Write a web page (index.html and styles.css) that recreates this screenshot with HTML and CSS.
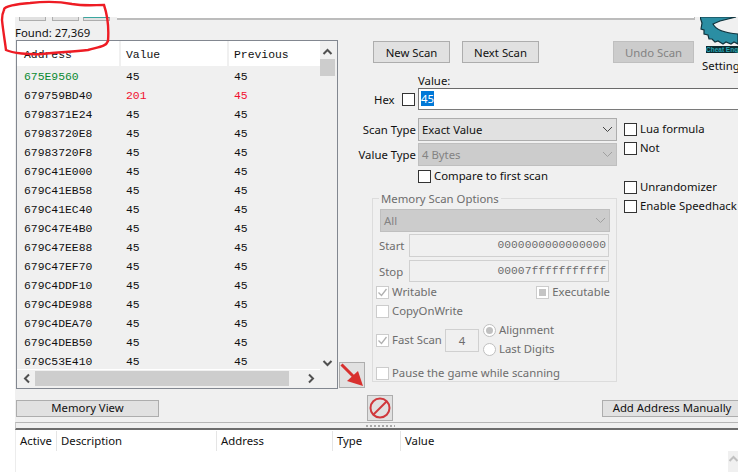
FILE: index.html
```html
<!DOCTYPE html>
<html lang="en">
<head>
<meta charset="utf-8">
<title>Cheat Engine</title>
<link rel="stylesheet" href="styles.css">
</head>
<body>
<div class="window">
  <div class="toolbar">
    <span class="stub stub-a"></span><span class="stub stub-b"></span><span class="stub stub-c"></span><span class="progress"></span>
  </div>
  <div class="found">Found: 27,369</div>
  <div class="middle">
    <div class="results">
      <div class="results-top">
        <div class="table">
          <div class="row head"><span>Address</span><span>Value</span><span>Previous</span></div>
          <div class="row"><span class="green">675E9560</span><span>45</span><span>45</span></div>
          <div class="row"><span>679759BD40</span><span class="red">201</span><span class="red">45</span></div>
          <div class="row"><span>6798371E24</span><span>45</span><span>45</span></div>
          <div class="row"><span>67983720E8</span><span>45</span><span>45</span></div>
          <div class="row"><span>67983720F8</span><span>45</span><span>45</span></div>
          <div class="row"><span>679C41E000</span><span>45</span><span>45</span></div>
          <div class="row"><span>679C41EB58</span><span>45</span><span>45</span></div>
          <div class="row"><span>679C41EC40</span><span>45</span><span>45</span></div>
          <div class="row"><span>679C47E4B0</span><span>45</span><span>45</span></div>
          <div class="row"><span>679C47EE88</span><span>45</span><span>45</span></div>
          <div class="row"><span>679C47EF70</span><span>45</span><span>45</span></div>
          <div class="row"><span>679C4DDF10</span><span>45</span><span>45</span></div>
          <div class="row"><span>679C4DE988</span><span>45</span><span>45</span></div>
          <div class="row"><span>679C4DEA70</span><span>45</span><span>45</span></div>
          <div class="row"><span>679C4DEB50</span><span>45</span><span>45</span></div>
          <div class="row"><span>679C53E410</span><span>45</span><span>45</span></div>
        </div>
        <div class="vscroll">
          <svg class="chev" width="11" height="8" viewBox="0 0 11 8"><path d="M1.5 6 L5.5 2 L9.5 6" /></svg>
          <div class="vthumb"></div>
          <svg class="chev chev-down" width="11" height="8" viewBox="0 0 11 8"><path d="M1.5 2 L5.5 6 L9.5 2" /></svg>
        </div>
      </div>
      <div class="hscroll">
        <svg class="chev" width="8" height="11" viewBox="0 0 8 11"><path d="M6 1.5 L2 5.5 L6 9.5" /></svg>
        <div class="hthumb"></div>
        <svg class="chev" width="8" height="11" viewBox="0 0 8 11"><path d="M2 1.5 L6 5.5 L2 9.5" /></svg>
      </div>
    </div>
    <div class="icon-btn arrow-btn">
      <svg width="24" height="24" viewBox="0 0 24 24"><path class="arrow-line" d="M1.5 1.5 L15 15"/><path class="arrow-head" d="M23 23 L7 18 L18 8 Z"/></svg>
    </div>
    <div class="panel">
      <div class="scan-buttons">
        <button class="btn scan-btn">New Scan</button>
        <button class="btn scan-btn next">Next Scan</button>
        <button class="btn undo" disabled>Undo Scan</button>
      </div>
      <div class="logo">
        <svg width="38" height="30" viewBox="0 0 38 30"><path class="gear" d="M0 0 L36 0 L20 4 L13 7 C16 13 25 16 38 17 L38 27 L34 25 L31 27 L26 25 L23 27 L18 24 L15 25 L12 22 L9 22 L8 18 L4 17 L4 13 L1 12 L2 6 Z"/></svg>
        <span class="logo-text">Cheat Engine</span>
        <span class="settings">Settings</span>
      </div>
      <div class="value-label">Value:</div>
      <div class="hex-row">
        <span class="hex">Hex</span>
        <span class="check"></span>
        <div class="value-input"><span class="selected">45</span></div>
      </div>
      <div class="scan-body">
        <div class="scan-col">
          <div class="type-row">
            <span class="type-label">Scan Type</span>
            <div class="select">Exact Value<svg width="11" height="7" viewBox="0 0 11 7"><path d="M1 1 L5.5 5.5 L10 1"/></svg></div>
          </div>
          <div class="type-row second">
            <span class="type-label">Value Type</span>
            <div class="select off">4 Bytes<svg width="11" height="7" viewBox="0 0 11 7"><path d="M1 1 L5.5 5.5 L10 1"/></svg></div>
          </div>
          <label class="opt compare"><span class="check"></span>Compare to first scan</label>
          <div class="group">
            <div class="legend">Memory Scan Options</div>
            <div class="select off all">All<svg width="11" height="7" viewBox="0 0 11 7"><path d="M1 1 L5.5 5.5 L10 1"/></svg></div>
            <div class="addr-row start"><span class="addr-label">Start</span><div class="addr">0000000000000000</div></div>
            <div class="addr-row stop"><span class="addr-label">Stop</span><div class="addr">00007fffffffffff</div></div>
            <div class="perm-row">
              <label class="opt dim"><span class="check dis"><svg width="11" height="11" viewBox="0 0 11 11"><path d="M1.5 5.5 L4.5 8.5 L9.5 2"/></svg></span>Writable</label>
              <label class="opt dim"><span class="check dis"><i class="mixed"></i></span>Executable</label>
            </div>
            <label class="opt dim copy"><span class="check dis"></span>CopyOnWrite</label>
            <div class="fast-row">
              <label class="opt dim"><span class="check dis"><svg width="11" height="11" viewBox="0 0 11 11"><path d="M1.5 5.5 L4.5 8.5 L9.5 2"/></svg></span>Fast Scan</label>
              <div class="fast-input">4</div>
              <div class="radios">
                <label class="opt dim"><span class="radio on"></span>Alignment</label>
                <label class="opt dim"><span class="radio"></span>Last Digits</label>
              </div>
            </div>
            <label class="opt dim pause"><span class="check dis"></span>Pause the game while scanning</label>
          </div>
        </div>
        <div class="side-col">
          <label class="opt"><span class="check"></span>Lua formula</label>
          <label class="opt"><span class="check"></span>Not</label>
          <label class="opt spaced"><span class="check"></span>Unrandomizer</label>
          <label class="opt"><span class="check"></span>Enable Speedhack</label>
        </div>
      </div>
    </div>
  </div>
  <div class="actions">
    <button class="btn memory">Memory View</button>
    <div class="icon-btn stop-btn">
      <svg width="24" height="24" viewBox="0 0 24 24"><circle cx="12" cy="12" r="9.5"/><path d="M5.5 18.5 L18.5 5.5"/></svg>
    </div>
    <button class="btn add">Add Address Manually</button>
  </div>
  <div class="splitter"><span class="grip"></span></div>
  <div class="addr-list">
    <div class="list-head">
      <span class="col-active">Active</span>
      <span class="col-desc">Description</span>
      <span class="col-addr">Address</span>
      <span class="col-type">Type</span>
      <span class="col-value">Value</span>
    </div>
    <div class="list-scroll"><svg class="chev faint" width="11" height="8" viewBox="0 0 11 8"><path d="M1.5 6 L5.5 2 L9.5 6"/></svg></div>
  </div>
</div>
<svg class="scribble" width="115" height="60" viewBox="0 0 115 60"><path d="M4 10 C3 6 18 4 30 3 C48 1 62 2 72 4 C84 6 94 5 104 5 C107 14 109 28 108 41 C106 47 98 47 88 50 C70 52 58 52 42 54 C30 55 12 53 6 50 C5 42 3 30 2 20 C2 15 3 12 4 10"/></svg>
</body>
</html>
```
FILE: styles.css
```css
html, body { margin: 0; padding: 0; background: #fff; }
body {
  width: 738px; height: 472px; overflow: hidden; position: relative;
  font: 11.35px/15px "Noto Sans", "Liberation Sans", sans-serif; color: #111;
}
.window {
  margin: 17px 0 0 15px; width: 723px; height: 455px;
  background: #f0f0f0; display: flex; flex-direction: column; overflow: hidden;
}
.toolbar { height: 4px; flex: none; display: flex; align-items: flex-end; padding-left: 4px; }
.stub { width: 27px; height: 4px; border: 1px solid #adadad; border-top: 0; background: #e1e1e1; box-sizing: border-box; }
.stub-b { margin-left: 6px; }
.stub-c { margin-left: 4px; border-top: 1px solid #3aa7a0; }
.progress { width: 578px; height: 3px; margin: 0 0 1px 7px; background: #fff; border-right: 1px solid #bcbcbc; border-bottom: 2px solid #bcbcbc; box-sizing: border-box; align-self: flex-start; }
.found { height: 19px; box-sizing: border-box; padding-top: 4px; flex: none; }

.middle { display: flex; height: 349px; flex: none; padding-left: 1px; }
.results { width: 322px; height: 349px; box-sizing: border-box; border: 1px solid #828790; flex: none; display: flex; flex-direction: column; }
.results-top { display: flex; height: 329px; flex: none; }
.table { width: 303px; overflow: hidden; background: #f0f0f0; border-bottom: 1px solid #fff; box-sizing: border-box; font: 11.4px/22px "Liberation Mono", monospace; }
.row { display: grid; grid-template-columns: 102px 108px 1fr; height: 19px; }
.row span { padding-left: 7px; }
.row.head { height: 25px; line-height: 28px; background: #fff; }
.row.head span + span { border-left: 2px solid #f0f0f0; padding-left: 5px; }
.green { color: #0a8a32; }
.red { color: #f01030; }
.vscroll { width: 17px; display: flex; flex-direction: column; align-items: center; padding: 7px 2px 0 0; box-sizing: border-box; }
.vthumb { width: 15px; height: 17px; background: #cdcdcd; margin-top: 3px; flex: none; }
.chev { fill: none; stroke: #505050; stroke-width: 2; flex: none; }
.chev-down { margin-top: auto; margin-bottom: 3px; }
.hscroll { height: 17px; display: flex; align-items: center; padding-left: 6px; }
.hthumb { width: 254px; height: 15px; background: #cdcdcd; margin: 0 18px 0 4px; }
.icon-btn { width: 26px; height: 26px; box-sizing: border-box; border: 1px solid #adadad; background: #e1e1e1; display: flex; align-items: center; justify-content: center; flex: none; }
.arrow-btn { align-self: flex-end; margin: 0 0 1px 1px; }
.arrow-line { stroke: #d8302e; stroke-width: 3; fill: none; }
.arrow-head { fill: #d8302e; }

.panel { flex: 1; position: relative; min-width: 0; }
.btn { font: inherit; color: inherit; background: #e1e1e1; border: 1px solid #adadad; padding: 0; box-sizing: border-box; display: block; }
.scan-buttons { display: flex; margin: 1px 0 0 8px; height: 22px; }
.scan-btn { width: 77px; }
.next { margin-left: 12px; }
.undo { width: 81px; margin-left: 74px; background: #ccc; border-color: #bfbfbf; color: #838383; }
.logo { position: absolute; left: 335px; top: -23px; width: 38px; height: 60px; }
.logo svg { display: block; }
.gear { fill: #2b8ea3; stroke: #10333d; stroke-width: 1.2; }
.logo-text { position: absolute; left: 6px; top: 29px; height: 7px; width: 32px; overflow: hidden; white-space: nowrap; background: #0c2b30; color: #2aa7b5; font: bold 6.5px/7px "Liberation Sans", sans-serif; }
.settings { position: absolute; left: 2px; top: 41px; }
.value-label { margin: 11px 0 0 53px; height: 13px; line-height: 13px; }
.hex-row { display: flex; align-items: center; height: 22px; margin-top: 1px; }
.hex { margin-left: 9px; width: 28px; }
.check { width: 13px; height: 13px; box-sizing: border-box; border: 1px solid #333; background: #fff; display: inline-flex; align-items: center; justify-content: center; flex: none; margin-right: 3px; }
.check.dis { border-color: #ccc; }
.check.dis svg { fill: none; stroke: #b0b0b0; stroke-width: 1.3; }
.mixed { width: 7px; height: 7px; background: #c4c4c4; display: block; }
.value-input { margin-left: 0; flex: 1; height: 22px; box-sizing: border-box; border: 1px solid #7a7a7a; border-top-color: #6a6a6a; background: #fff; padding-left: 2px; line-height: 20px; margin-right: -40px; }
.selected { background: #0078d7; color: #fff; display: inline-block; height: 15px; line-height: 15px; }

.scan-body { display: flex; margin-top: 8px; }
.scan-col { width: 252px; flex: none; }
.type-row { display: flex; align-items: center; }
.type-row.second { margin-top: 2px; }
.type-label { width: 58px; margin-left: -7px; text-align: right; margin-right: 2px; white-space: nowrap; flex: none; }
.select { width: 199px; height: 23px; box-sizing: border-box; border: 1px solid #adadad; background: #e1e1e1; padding: 0 3px; display: flex; align-items: center; justify-content: space-between; line-height: 21px; flex: none; }
.select svg { fill: none; stroke: #444; stroke-width: 1; margin-right: 0; }
.select.off { background: #ccc; border-color: #bfbfbf; color: #838383; }
.select.off svg { stroke: #a0a0a0; }
.opt { display: flex; align-items: flex-start; height: 15px; line-height: 13px; white-space: nowrap; }
.opt .check, .opt .radio { margin-top: 1px; }
.compare { margin: 3px 0 0 53px; }
.dim { color: #6d6d6d; }

.group { position: relative; width: 245px; height: 184px; margin: 14px 0 0 7px; box-sizing: border-box; border: 1px solid #dcdcdc; padding: 10px 0 0 3px; }
.legend { position: absolute; left: 6px; top: -7px; padding: 0 2px; background: #f0f0f0; color: #6d6d6d; line-height: 14px; }
.all { width: 230px; margin-left: 4px; }
.addr-row { display: flex; align-items: center; margin-top: 2px; }
.addr-row.stop { margin-top: 3px; }
.addr-label { margin-left: 3px; width: 30px; color: #6d6d6d; }
.addr { width: 200px; height: 23px; box-sizing: border-box; border: 1px solid #d0d0d0; background: #f0f0f0; text-align: right; padding-right: 2px; color: #6d6d6d; font: 11.3px/21px "Liberation Mono", monospace; }
.stop .addr { height: 22px; line-height: 20px; }
.perm-row { display: flex; justify-content: space-between; margin-top: 3px; padding-right: 6px; }
.copy { margin-top: 4px; }
.fast-row { display: flex; align-items: center; height: 42px; margin-top: 0; }
.fast-row > .opt { width: 69px; }
.fast-input { width: 34px; height: 23px; box-sizing: border-box; border: 1px solid #d0d0d0; text-align: center; line-height: 21px; color: #6d6d6d; }
.radios { margin-left: 4px; display: flex; flex-direction: column; gap: 4px; }
.radio { width: 13px; height: 13px; box-sizing: border-box; border: 1px solid #c0c0c0; border-radius: 50%; background: #fff; margin-right: 3px; display: flex; align-items: center; justify-content: center; flex: none; }
.radio.on::after { content: ""; width: 7px; height: 7px; border-radius: 50%; background: #c0c0c0; }
.pause { margin-top: 5px; }
.side-col { margin-left: 7px; padding-top: 4px; display: flex; flex-direction: column; gap: 4px; }
.spaced { margin-top: 20px; }

.actions { display: flex; height: 26px; margin-top: 6px; align-items: center; flex: none; position: relative; }
.memory { width: 143px; height: 17px; margin-left: 1px; line-height: 14px; flex: none; }
.stop-btn { margin-left: 208px; }
.stop-btn svg { fill: none; stroke: #d0383c; stroke-width: 2; }
.add { width: 140px; height: 17px; margin-left: 209px; line-height: 14px; flex: none; }
.splitter { height: 5px; margin-top: 1px; flex: none; border-top: 1px solid #b5b5b5; border-bottom: 2px solid #6d6d6d; border-left: 1px solid #c8c8c8; position: relative; }
.grip { display: block; width: 29px; margin-left: 350px; height: 2px; margin-top: 2px; background: repeating-linear-gradient(90deg, #a8a8a8 0 2px, transparent 2px 4px); }
.addr-list { flex: 1; background: #fff; position: relative; border-left: 1px solid #ececec; }
.list-head { display: grid; grid-template-columns: 40px 160px 116px 68px 1fr; height: 20px; margin-top: 1px; line-height: 20px; }
.list-head span { padding-left: 4px; border-left: 1px solid #e5e5e5; }
.list-head span:first-child { border-left: 0; }
.list-scroll { position: absolute; right: 0; top: 21px; width: 10px; bottom: 0; background: #f0f0f0; overflow: hidden; }
.faint { stroke: #c0c0c0; }
.scribble { position: absolute; left: 0; top: 0; }
.scribble path { fill: none; stroke: #ee1c24; stroke-width: 2.4; stroke-linecap: round; }
```
